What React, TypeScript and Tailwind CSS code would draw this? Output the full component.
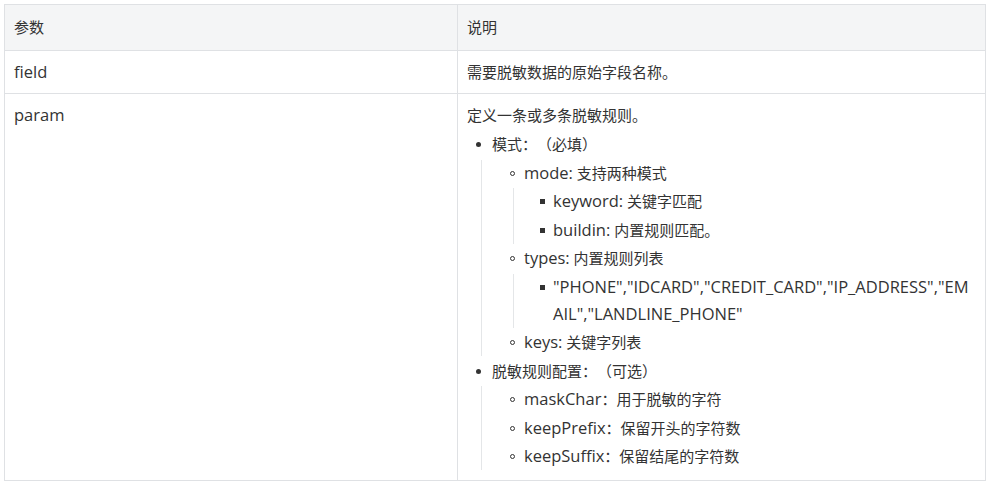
import type { ReactNode } from "react"

type Item = { text: ReactNode; children?: Item[] }

// latin runs are drawn a bit larger so they match the reference's wider Latin glyphs
function L({ children }: { children: ReactNode }) {
    return <span className="text-[16.5px] leading-[16px]">{children}</span>
}

const rules: Item[] = [
    {
        text: "模式：（必填）",
        children: [
            {
                text: (
                    <>
                        <L>mode:</L> 支持两种模式
                    </>
                ),
                children: [
                    {
                        text: (
                            <>
                                <L>keyword:</L> 关键字匹配
                            </>
                        ),
                    },
                    {
                        text: (
                            <>
                                <L>buildin:</L> 内置规则匹配。
                            </>
                        ),
                    },
                ],
            },
            {
                text: (
                    <>
                        <L>types:</L> 内置规则列表
                    </>
                ),
                children: [
                    {
                        text: (
                            <L>
                                "PHONE","IDCARD","CREDIT_CARD","IP_ADDRESS","EM
                                <br />
                                AIL","LANDLINE_PHONE"
                            </L>
                        ),
                    },
                ],
            },
            {
                text: (
                    <>
                        <L>keys:</L> 关键字列表
                    </>
                ),
            },
        ],
    },
    {
        text: "脱敏规则配置：（可选）",
        children: [
            {
                text: (
                    <>
                        <L>maskChar</L>：用于脱敏的字符
                    </>
                ),
            },
            {
                text: (
                    <>
                        <L>keepPrefix</L>：保留开头的字符数
                    </>
                ),
            },
            {
                text: (
                    <>
                        <L>keepSuffix</L>：保留结尾的字符数
                    </>
                ),
            },
        ],
    },
]

function Bullet({ level }: { level: number }) {
    if (level === 0) return <span className="absolute left-[-16px] top-[11px] w-[5px] h-[5px] rounded-full bg-[#333]" />
    if (level === 1)
        return <span className="absolute left-[-14px] top-[11px] w-[5px] h-[5px] rounded-full border border-[#333]" />
    return <span className="absolute left-[-13px] top-[11px] w-[5px] h-[5px] bg-[#333]" />
}

function List({ items, level }: { items: Item[]; level: number }) {
    let cls = "pl-[25px] flex flex-col gap-[1.5px] mt-[2px]"
    if (level === 1) cls = "ml-[-11px] border-l border-[#e4e6e8] pl-[42px] flex flex-col gap-[1.5px] mt-[1.5px]"
    if (level === 2) cls = "ml-[-11px] border-l border-[#e4e6e8] pl-[39px] flex flex-col gap-[1.5px] mt-[1.5px]"
    return (
        <ul className={cls}>
            {items.map((it, i) => (
                <li key={i} className="relative">
                    <Bullet level={level} />
                    <div className="break-all">{it.text}</div>
                    {it.children ? <List items={it.children} level={level + 1} /> : null}
                </li>
            ))}
        </ul>
    )
}

export default function App() {
    return (
        <div
            className="bg-white w-[992px] h-[485px] pt-[4px] pl-[4px] text-[15px] leading-[27px] text-[#333] [text-spacing-trim:space-all]"
            style={{ fontFamily: '"Open Sans", "Noto Sans CJK SC", sans-serif' }}
        >
            <table className="w-[982px] border-collapse table-fixed">
                <colgroup>
                    <col className="w-[453px]" />
                    <col />
                </colgroup>
                <thead>
                    <tr className="bg-[#f4f5f6] h-[46px]">
                        <th className="border border-[#dfe1e4] px-[9px] text-left font-normal">参数</th>
                        <th className="border border-[#dfe1e4] px-[9px] text-left font-normal">说明</th>
                    </tr>
                </thead>
                <tbody>
                    <tr className="h-[43px]">
                        <td className="border border-[#dfe1e4] px-[9px]">
                            <L>field</L>
                        </td>
                        <td className="border border-[#dfe1e4] px-[9px]">需要脱敏数据的原始字段名称。</td>
                    </tr>
                    <tr>
                        <td className="border border-[#dfe1e4] px-[9px] pt-[8px] align-top">
                            <L>param</L>
                        </td>
                        <td className="border border-[#dfe1e4] pl-[9px] pr-[9px] pt-[8px] pb-[10px] align-top">
                            <p>定义一条或多条脱敏规则。</p>
                            <List items={rules} level={0} />
                        </td>
                    </tr>
                </tbody>
            </table>
        </div>
    )
}
